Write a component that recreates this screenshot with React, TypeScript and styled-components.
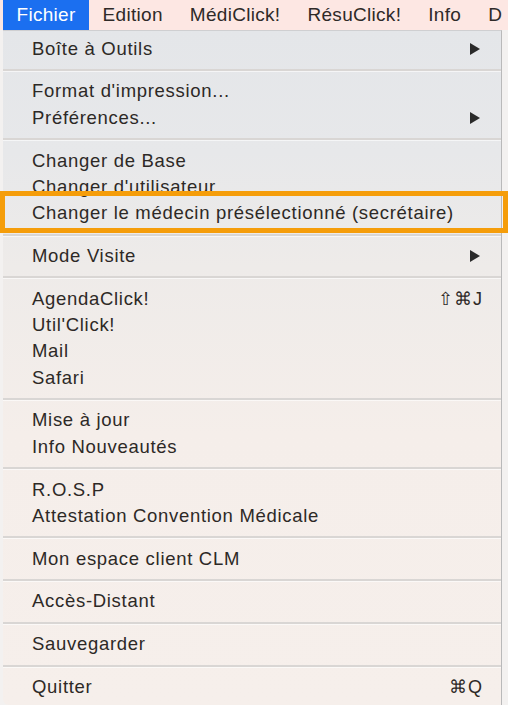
import React from "react";
import styled, { createGlobalStyle } from "styled-components";

const Global = createGlobalStyle`
  html, body { margin: 0; padding: 0; }
  body {
    width: 508px;
    height: 705px;
    overflow: hidden;
    background: #f3f1f0;
    font-family: "Liberation Sans", Arial, Helvetica, sans-serif;
    -webkit-font-smoothing: antialiased;
  }
`;

const Screen = styled.div`
  position: relative;
  width: 508px;
  height: 705px;
  overflow: hidden;
`;

const MenuBar = styled.div`
  display: flex;
  align-items: stretch;
  height: 30px;
  padding-left: 3px;
  background: #fde7e3;
  font-size: 19px;
  letter-spacing: 0.3px;
  color: #2e2a28;
  overflow: hidden;
`;

const BarItem = styled.div<{ $active?: boolean }>`
  display: flex;
  align-items: center;
  padding: 0 13.5px;
  white-space: nowrap;
  background: ${(p) => (p.$active ? "#1b6ff0" : "transparent")};
  color: ${(p) => (p.$active ? "#ffffff" : "#2e2a28")};
`;

const Menu = styled.div`
  margin-left: 3px;
  width: 499px;
  height: 675px;
  box-sizing: border-box;
  padding-top: 4.5px;
  border-right: 1px solid #b9b9ba;
  border-top: 1px solid #cfcfd1;
  border-bottom-left-radius: 6px;
  background: linear-gradient(
    180deg,
    #e4e6e9 0%,
    #e7e8ea 18%,
    #eeebe9 35%,
    #f5eeea 60%,
    #f6efeb 100%
  );
  font-size: 18.5px;
  letter-spacing: 0.7px;
  color: #2d2926;
`;

const Row = styled.div`
  display: flex;
  align-items: center;
  height: 26.3px;
  padding: 0 18px 0 29px;
  white-space: nowrap;
`;

const Label = styled.span`
  flex: 1;
`;

const Shortcut = styled.span`
  font-size: 18px;
  letter-spacing: 1px;
  color: #2d2926;
`;

const Arrow = styled.span`
  width: 0;
  height: 0;
  margin-right: 3px;
  border-top: 6px solid transparent;
  border-bottom: 6px solid transparent;
  border-left: 10px solid #2a2a2a;
`;

const Separator = styled.div`
  height: 16.5px;
  display: flex;
  align-items: center;
  &::before {
    content: "";
    display: block;
    width: 100%;
    height: 2px;
    background: #d9d6d4;
    box-shadow: 0 1px 0 rgba(255, 255, 255, 0.6);
  }
`;

const Highlight = styled.div`
  position: absolute;
  left: 0;
  top: 191px;
  width: 508px;
  height: 42px;
  box-sizing: border-box;
  border: 5px solid #f59d0a;
  pointer-events: none;
`;

type Item = { label: string; shortcut?: string; submenu?: boolean };

const groups: Item[][] = [
  [{ label: "Boîte à Outils", submenu: true }],
  [{ label: "Format d'impression..." }, { label: "Préférences...", submenu: true }],
  [
    { label: "Changer de Base" },
    { label: "Changer d'utilisateur" },
    { label: "Changer le médecin présélectionné (secrétaire)" },
  ],
  [{ label: "Mode Visite", submenu: true }],
  [
    { label: "AgendaClick!", shortcut: "⇧⌘J" },
    { label: "Util'Click!" },
    { label: "Mail" },
    { label: "Safari" },
  ],
  [{ label: "Mise à jour" }, { label: "Info Nouveautés" }],
  [{ label: "R.O.S.P" }, { label: "Attestation Convention Médicale" }],
  [{ label: "Mon espace client CLM" }],
  [{ label: "Accès-Distant" }],
  [{ label: "Sauvegarder" }],
  [{ label: "Quitter", shortcut: "⌘Q" }],
];

const barItems = ["Fichier", "Edition", "MédiClick!", "RésuClick!", "Info", "D"];

export default function App() {
  return (
    <Screen>
      <Global />
      <MenuBar>
        {barItems.map((b, i) => (
          <BarItem key={b} $active={i === 0}>
            {b}
          </BarItem>
        ))}
      </MenuBar>
      <Menu>
        {groups.map((g, gi) => (
          <React.Fragment key={gi}>
            {gi > 0 && <Separator />}
            {g.map((it) => (
              <Row key={it.label}>
                <Label>{it.label}</Label>
                {it.shortcut && <Shortcut>{it.shortcut}</Shortcut>}
                {it.submenu && <Arrow />}
              </Row>
            ))}
          </React.Fragment>
        ))}
      </Menu>
      <Highlight />
    </Screen>
  );
}
